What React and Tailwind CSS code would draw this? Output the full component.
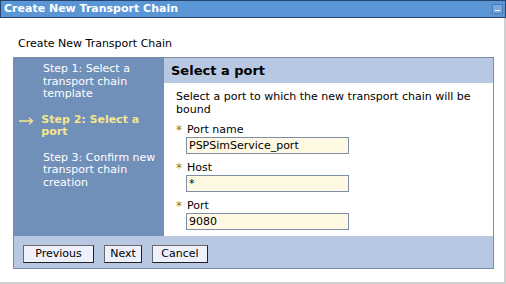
import React from 'react';

const Field = ({ label, value }) => (
  <div className="mt-[8px]">
    <div className="flex items-center h-[12px]">
      <span className="w-[11px] text-[#8a7a2a] text-[12px] leading-none">*</span>
      <span>{label}</span>
    </div>
    <div className="ml-[10px] mt-[1px] w-[163px] h-[17px] bg-[#fff8e2] border border-[#7e8ea4] px-[2px] leading-[15px]">
      {value}
    </div>
  </div>
);

const App = () => {
  return (
    <div
      className="w-[506px] h-[284px] bg-white text-[11px] text-black overflow-hidden"
      style={{ fontFamily: '"DejaVu Sans", Verdana, sans-serif' }}
    >
      {/* title bar */}
      <div className="h-[18px] bg-[#5a96d6] border border-[#27466f] flex items-center justify-between pl-[3px] pr-[2px]">
        <span className="font-bold text-white text-[11px]">Create New Transport Chain</span>
        <div className="w-[11px] h-[10px] bg-[#7aa8dc] border border-[#4a7ab4] flex items-end justify-center pb-[2px]">
          <div className="w-[5px] h-[1px] bg-white" />
        </div>
      </div>

      <div className="h-[266px] border-r-2 border-b-2 border-[#d0d0d0] pt-[19px]">
        <div className="pl-[18px] h-[14px] leading-[14px]">Create New Transport Chain</div>

        <div className="ml-[13px] mt-[6px] w-[481px] border border-[#7a8ca6]">
          <div className="flex h-[178px]">
            {/* steps */}
            <div className="w-[150px] bg-[#7090ba] text-white pt-[5px] leading-[12.5px]">
              <div className="pl-[29px] pr-[4px]">Step 1: Select a transport chain template</div>
              <div className="flex mt-[13px]">
                <span className="w-[29px] pl-[5px] pt-[3px]">
                  <svg width="15" height="8" viewBox="0 0 15 8" fill="none" stroke="#f6e68e" strokeWidth="1.4">
                    <path d="M0 4h13.5M10 0.8l3.5 3.2-3.5 3.2" />
                  </svg>
                </span>
                <span className="font-bold text-[#f6e68e] pr-[4px]">Step 2: Select a port</span>
              </div>
              <div className="pl-[29px] pr-[4px] mt-[13px]">Step 3: Confirm new transport chain creation</div>
            </div>

            {/* content */}
            <div className="flex-1 bg-white">
              <div className="h-[25px] bg-[#b8c8e2] flex items-center pl-[7px] font-bold text-[13px]">Select a port</div>
              <div className="pl-[12px] pt-[8px] leading-[12.5px]">
                <div className="pr-[10px]">Select a port to which the new transport chain will be bound</div>
                <Field label="Port name" value="PSPSimService_port" />
                <Field label="Host" value="*" />
                <Field label="Port" value="9080" />
              </div>
            </div>
          </div>

          {/* buttons */}
          <div className="h-[32px] bg-[#b8c8e2] flex items-center pl-[9px] gap-[10px] pt-[3px]">
            <button className="h-[18px] w-[71px] bg-[#eef0fc] border border-[#6a6a6a] border-r-[#222] border-b-[#222] text-[11px]">Previous</button>
            <button className="h-[18px] w-[38px] bg-[#eef0fc] border border-[#6a6a6a] border-r-[#222] border-b-[#222] text-[11px]">Next</button>
            <button className="h-[18px] w-[56px] bg-[#eef0fc] border border-[#6a6a6a] border-r-[#222] border-b-[#222] text-[11px]">Cancel</button>
          </div>
        </div>
      </div>
    </div>
  );
};

export default App;
